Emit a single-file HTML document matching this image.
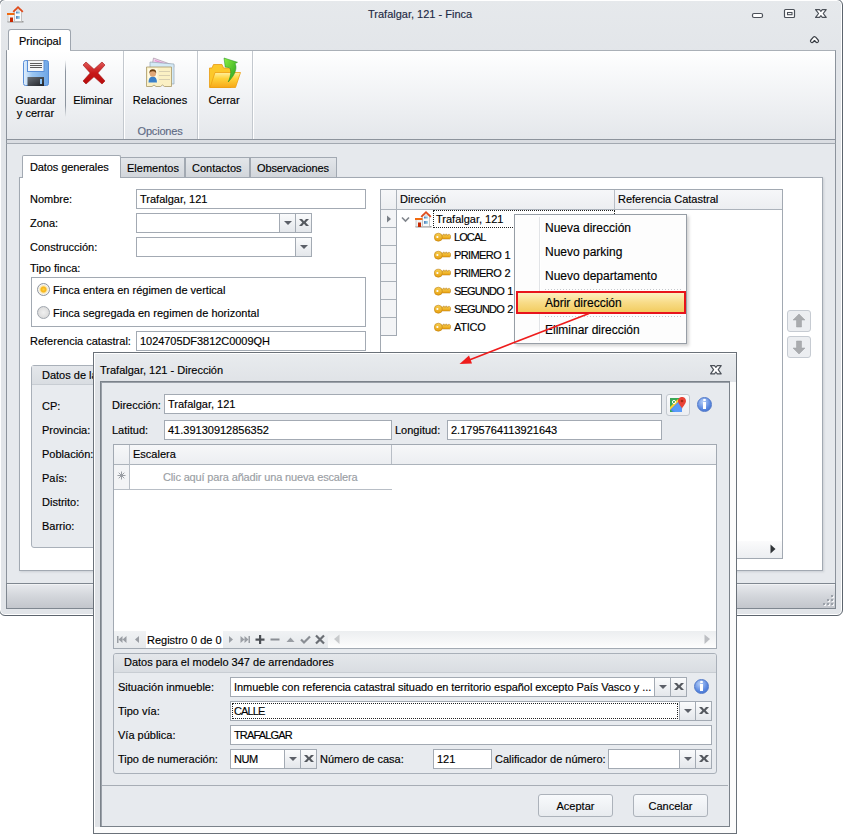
<!DOCTYPE html>
<html><head><meta charset="utf-8">
<style>
*{box-sizing:border-box;margin:0;padding:0}
html,body{width:844px;height:836px;overflow:hidden;background:#fff;font-family:"Liberation Sans",sans-serif;font-size:11px;color:#000}
.a{position:absolute}
.t{position:absolute;white-space:pre;line-height:13px;font-size:11px;-webkit-text-stroke:0.15px currentColor}
.m{font-size:12px;line-height:14px}
.inp{position:absolute;background:#fff;border:1px solid #a3aab3}
.btn{position:absolute;border:1px solid #a3aab3;background:linear-gradient(#fafbfc,#e4e7eb)}
.dd:after{content:"";position:absolute;left:50%;top:50%;margin:-2px 0 0 -4px;border-left:4px solid transparent;border-right:4px solid transparent;border-top:4px solid #5c6068}
.gb{position:absolute;border:1px solid #a9b0b9;border-radius:3px;background:#e8ebef}
.xg{position:absolute;width:11px;height:10px}
.xg:before,.xg:after{content:"";position:absolute;left:0;top:4px;width:11px;height:2.4px;background:#55595f;transform:rotate(40deg)}
.xg:after{transform:rotate(-40deg)}
.hl{position:absolute;height:1px}
.vl{position:absolute;width:1px}
</style></head><body>

<!-- MAIN WINDOW frame -->
<div class="a" style="left:-1px;top:-1px;width:844px;height:617px;background:linear-gradient(#e6e9ec,#e2e5e9 60px,#e2e5e9);border:1px solid #5d656e;border-radius:6px;box-shadow:inset 0 0 0 1px #fff"></div>
<!-- title icon -->
<svg class="a" style="left:7px;top:5px" width="17" height="18" viewBox="0 0 17 18">
  <rect x="0.5" y="16" width="16" height="1.5" fill="#9a9a9a"/>
  <rect x="7.5" y="5" width="7" height="11.5" fill="#fafafa" stroke="#b8b8b8" stroke-width="0.8"/>
  <polyline points="6.2,6.8 11,2.2 15.8,6.8" fill="none" stroke="#e04a1a" stroke-width="1.8"/>
  <defs><linearGradient id="hw" x1="0" x2="1"><stop offset="0" stop-color="#4a7ab8"/><stop offset="1" stop-color="#a8e0f0"/></linearGradient></defs>
  <rect x="9" y="6.5" width="4" height="2" fill="url(#hw)"/>
  <rect x="9" y="11" width="4" height="2.8" fill="url(#hw)"/>
  <rect x="1" y="9.5" width="6.5" height="7" fill="#f2f2f2" stroke="#b8b8b8" stroke-width="0.7"/>
  <rect x="0" y="8" width="7.5" height="2" fill="#f06a10"/>
  <rect x="3" y="12.5" width="3" height="4.5" fill="#c82800"/>
</svg>
<div class="t" style="left:368px;top:8px;color:#1e2a44">Trafalgar, 121 - Finca</div>
<!-- window buttons -->
<svg class="a" style="left:748px;top:6px" width="84" height="16" viewBox="0 0 84 16">
  <rect x="4.5" y="7.5" width="10" height="4" rx="1.5" fill="#fff" stroke="#4b5058" stroke-width="1.2"/>
  <rect x="36.5" y="3.5" width="10" height="8" rx="1" fill="#fff" stroke="#4b5058" stroke-width="1.2"/>
  <rect x="39.5" y="6.5" width="4.5" height="2.2" fill="#fff" stroke="#4b5058" stroke-width="1.1"/>
  <path d="M67.60,3.60 L71.52,3.60 L72.90,5.32 L74.28,3.60 L78.20,3.60 L75.23,7.50 L78.20,11.40 L74.28,11.40 L72.90,9.68 L71.52,11.40 L67.60,11.40 L70.57,7.50 Z" fill="#fff" stroke="#4b5058" stroke-width="1.2" stroke-linejoin="round"/>
</svg>
<svg class="a" style="left:807px;top:33px" width="14" height="12" viewBox="0 0 14 12">
  <path d="M5,8 L7.5,5.2 L10,8" fill="none" stroke="#3a3f46" stroke-width="4.2" stroke-linecap="round" stroke-linejoin="round"/>
  <path d="M5,8 L7.5,5.2 L10,8" fill="none" stroke="#fff" stroke-width="1.8" stroke-linecap="round" stroke-linejoin="round"/>
</svg>
<!-- ribbon tab -->
<div class="a" style="left:8px;top:29px;width:63px;height:23px;background:#fff;border:1px solid #9ea5ae;border-bottom:none;border-radius:3px 3px 0 0"></div>
<div class="t" style="left:19px;top:35px">Principal</div>
<!-- ribbon panel -->
<div class="a" style="left:6px;top:50px;width:830px;height:90px;border:1px solid #8c939c;border-top-color:#aab0b7;background:linear-gradient(#ffffff 0%,#f9fafb 20%,#eceef1 70%,#e4e7eb 100%)"></div>
<div class="a" style="left:7px;top:50px;width:63px;height:1px;background:#fff"></div>
<!-- main panel -->
<div class="a" style="left:6px;top:140px;width:830px;height:3px;background:#dadde2;border-left:1px solid #8c939c;border-right:1px solid #8c939c"></div>
<div class="a" style="left:6px;top:143px;width:830px;height:441px;background:#e6e9ed;border:1px solid #8c939c;border-top:1px solid #a2a8b0;border-bottom:none"></div>
<!-- status bar -->
<div class="a" style="left:6px;top:583px;width:830px;height:26px;border:1px solid #7f8790;background:linear-gradient(#e8eaee,#d3d6db 50%,#c3c6cc);box-shadow:inset 0 1px 0 #f2f3f5"></div>

<!-- grip -->
<svg class="a" style="left:820px;top:592px" width="14" height="14" viewBox="0 0 14 14">
 <g fill="#f4f5f7"><rect x="12" y="4" width="2" height="2"/><rect x="8" y="8" width="2" height="2"/><rect x="12" y="8" width="2" height="2"/><rect x="4" y="12" width="2" height="2"/><rect x="8" y="12" width="2" height="2"/><rect x="12" y="12" width="2" height="2"/></g>
 <g fill="#9ba1a9"><rect x="11" y="3" width="2" height="2"/><rect x="7" y="7" width="2" height="2"/><rect x="11" y="7" width="2" height="2"/><rect x="3" y="11" width="2" height="2"/><rect x="7" y="11" width="2" height="2"/><rect x="11" y="11" width="2" height="2"/></g>
</svg>
<!-- RIBBON CONTENT -->
<div class="a" style="left:65px;top:60px;width:1px;height:57px;background:linear-gradient(rgba(140,148,158,0),#8c949e 20%,#8c949e 80%,rgba(140,148,158,0))"></div>
<div class="a" style="left:123px;top:51px;width:1px;height:88px;background:#c3c8ce"></div>
<div class="a" style="left:124px;top:51px;width:1px;height:88px;background:#fff"></div>
<div class="a" style="left:197px;top:51px;width:1px;height:88px;background:#c3c8ce"></div>
<div class="a" style="left:198px;top:51px;width:1px;height:88px;background:#fff"></div>
<div class="a" style="left:252px;top:51px;width:1px;height:88px;background:#c3c8ce"></div>
<div class="a" style="left:253px;top:51px;width:1px;height:88px;background:#fff"></div>
<!-- floppy -->
<svg class="a" style="left:23px;top:60px" width="26" height="26" viewBox="0 0 26 26">
  <defs><linearGradient id="fb" x1="0" x2="1"><stop offset="0" stop-color="#e4f0fc"/><stop offset="0.35" stop-color="#9cc7f2"/><stop offset="1" stop-color="#6ea6e6"/></linearGradient>
  <linearGradient id="fs" x1="0" y1="0" x2="1" y2="1"><stop offset="0" stop-color="#6a7078"/><stop offset="1" stop-color="#202226"/></linearGradient></defs>
  <rect x="0.5" y="0.5" width="25" height="25" rx="2" fill="url(#fb)" stroke="#5a8fd8"/>
  <rect x="4.5" y="0.5" width="16.5" height="11" fill="#f4f6f8" stroke="#5a8fd8"/>
  <rect x="5" y="0" width="15.5" height="1" fill="#999"/>
  <path d="M7,3.5H19M7,5.5H19M7,7.5H19" stroke="#4a4a4a" stroke-width="0.9"/>
  <rect x="4.5" y="17" width="16.5" height="9" fill="url(#fs)"/>
  <rect x="17" y="19" width="2" height="5" fill="#8cc4f6"/>
</svg>
<!-- red X -->
<svg class="a" style="left:82px;top:61px" width="24" height="24" viewBox="0 0 24 24">
  <defs><linearGradient id="xr" x1="0" y1="0" x2="0" y2="1"><stop offset="0" stop-color="#e05858"/><stop offset="0.5" stop-color="#c81818"/><stop offset="1" stop-color="#b80c0c"/></linearGradient></defs>
  <path d="M4,1 L12,8.2 L20,1 L23,4 L15.8,12 L23,20 L20,23 L12,15.8 L4,23 L1,20 L8.2,12 L1,4 Z" fill="url(#xr)" stroke="#a01010" stroke-width="0.6" stroke-linejoin="round"/>
</svg>
<!-- relaciones -->
<svg class="a" style="left:144px;top:56px" width="32" height="32" viewBox="0 0 32 32">
  <path d="M9.5,2 L30,9.5 L26,28 L6,20 Z" fill="#f4d0ec" stroke="#a898a8" stroke-width="0.7"/>
  <path d="M11,4.5 L27,10" stroke="#e090d0" stroke-width="1.2"/>
  <path d="M6,6 L30,8 L30,28 L6,27 Z" fill="#d4eaf6" stroke="#98a8b4" stroke-width="0.7"/>
  <path d="M2.5,11 H27.5 V30.5 H20.5 Q18.5,27.5 16.5,30.5 H12 Q10,27.5 8,30.5 H2.5 Z" fill="#fbf0c4" stroke="#a89868" stroke-width="0.8"/>
  <rect x="4" y="12.5" width="9.5" height="14" fill="#fffbe6"/>
  <path d="M4.5,26.5 Q4.5,20.5 8.8,20.5 Q13,20.5 13,26.5 Z" fill="#3a80c8"/>
  <circle cx="8.8" cy="17.5" r="3.2" fill="#e0a878"/>
  <path d="M5.4,17.5 Q5,13.2 8.8,13.2 Q12.6,13.2 12.2,17.5 Q11.5,15 8.8,15.2 Q6,15 5.4,17.5Z" fill="#6a3e10"/>
  <path d="M15,15.5H26M15,19.5H26M15,23.5H26" stroke="#d8ceb0" stroke-width="1"/>
</svg>
<!-- folder -->
<svg class="a" style="left:208px;top:56px" width="34" height="33" viewBox="0 0 34 33">
  <defs><linearGradient id="fo" x1="0" y1="0" x2="0" y2="1"><stop offset="0" stop-color="#fff0a0"/><stop offset="0.4" stop-color="#ffd33a"/><stop offset="1" stop-color="#f7a818"/></linearGradient>
  <linearGradient id="ga" x1="0" y1="0" x2="1" y2="1"><stop offset="0" stop-color="#8cf040"/><stop offset="1" stop-color="#1e9a1e"/></linearGradient></defs>
  <path d="M1.5,12 L4,12 L5.5,8.5 L14,8.5 L15.5,12 L23,12 L23,31.5 L1.5,31.5 Z" fill="#fcc82a" stroke="#e89a10" stroke-width="0.8"/>
  <path d="M7,16.5 L32.5,16.5 L27.5,31.5 L2,31.5 Z" fill="url(#fo)" stroke="#eea010" stroke-width="0.8"/>
  <path d="M16,2 L29.5,6.3 L27,7.6 C29,11 28.5,17.5 20.2,26 C23.2,19 23.6,13.8 21.2,11.6 L17.2,11 Z" fill="url(#ga)" stroke="#1a8a1a" stroke-width="0.5"/>
</svg>
<div class="t" style="left:0px;width:71px;text-align:center;top:94px">Guardar</div>
<div class="t" style="left:0px;width:71px;text-align:center;top:107px">y cerrar</div>
<div class="t" style="left:63px;width:60px;text-align:center;top:94px">Eliminar</div>
<div class="t" style="left:120px;width:80px;text-align:center;top:94px">Relaciones</div>
<div class="t" style="left:194px;width:60px;text-align:center;top:94px">Cerrar</div>
<div class="t" style="left:120px;width:80px;text-align:center;top:125px;color:#5e6a84;letter-spacing:-0.2px">Opciones</div>

<!-- TAB CONTROL -->
<div class="a" style="left:19px;top:177px;width:804px;height:394px;background:#fff;border:1px solid #a2a9b2;box-shadow:1px 1px 2px rgba(120,130,140,0.25)"></div>
<div class="a" style="left:22px;top:155px;width:99px;height:23px;background:#fff;border:1px solid #a2a9b2;border-bottom:none;border-radius:2px 2px 0 0"></div>
<div class="a" style="left:120px;top:157px;width:65px;height:21px;background:linear-gradient(#e3e6ea,#d2d6db);border:1px solid #a2a9b2"></div>
<div class="a" style="left:185px;top:157px;width:65px;height:21px;background:linear-gradient(#e3e6ea,#d2d6db);border:1px solid #a2a9b2"></div>
<div class="a" style="left:250px;top:157px;width:87px;height:21px;background:linear-gradient(#e3e6ea,#d2d6db);border:1px solid #a2a9b2"></div>
<div class="t" style="left:30px;top:161px;letter-spacing:-0.1px">Datos generales</div>
<div class="t" style="left:127px;top:162px">Elementos</div>
<div class="t" style="left:192px;top:162px">Contactos</div>
<div class="t" style="left:257px;top:162px;letter-spacing:-0.12px">Observaciones</div>
<!-- left form -->
<div class="t" style="left:30px;top:193px">Nombre:</div>
<div class="t" style="left:30px;top:217px">Zona:</div>
<div class="t" style="left:30px;top:241px">Construcción:</div>
<div class="t" style="left:30px;top:262px">Tipo finca:</div>
<div class="t" style="left:30px;top:335px">Referencia catastral:</div>
<div class="inp" style="left:136px;top:189px;width:230px;height:20px"></div>
<div class="t" style="left:140px;top:193px">Trafalgar, 121</div>
<div class="inp" style="left:136px;top:213px;width:176px;height:20px"></div>
<div class="btn dd" style="left:279px;top:213px;width:17px;height:20px"></div>
<div class="btn" style="left:295px;top:213px;width:17px;height:20px"></div>
<svg class="a" style="left:299px;top:219px" width="10" height="7" viewBox="0 0 10 7"><path d="M0,0H3L5,2.2L7,0H10L6.7,3.5L10,7H7L5,4.8L3,7H0L3.3,3.5Z" fill="#55595f"/></svg>
<div class="inp" style="left:136px;top:237px;width:176px;height:20px"></div>
<div class="btn dd" style="left:295px;top:237px;width:17px;height:20px"></div>
<div class="a" style="left:31px;top:277px;width:335px;height:50px;border:1px solid #a2a9b2;background:#fff"></div>
<div class="a" style="left:37px;top:283px;width:13px;height:13px;border-radius:50%;border:1px solid #8e949c;background:radial-gradient(circle,#ffd040 0,#f6b418 2.5px,#fbe6a8 3.5px,#f4f4f4 5px)"></div>
<div class="a" style="left:37px;top:306px;width:13px;height:13px;border-radius:50%;border:1px solid #a0a6ae;background:radial-gradient(circle,#f0f0f0 0,#e2e2e2 4px,#d8d8d8 6px)"></div>
<div class="t" style="left:53px;top:284px">Finca entera en régimen de vertical</div>
<div class="t" style="left:53px;top:307px">Finca segregada en regimen de horizontal</div>
<div class="inp" style="left:136px;top:331px;width:230px;height:20px"></div>
<div class="t" style="left:140px;top:335px;letter-spacing:-0.05px">1024705DF3812C0009QH</div>
<!-- group box Datos de la -->
<div class="gb" style="left:31px;top:365px;width:300px;height:183px"></div>
<div class="a" style="left:32px;top:366px;width:298px;height:19px;background:linear-gradient(#e4e7eb,#d9dde2);border-bottom:1px solid #c8cdd3"></div>
<div class="t" style="left:42px;top:369px">Datos de la</div>
<div class="t" style="left:42px;top:400px">CP:</div>
<div class="t" style="left:42px;top:424px">Provincia:</div>
<div class="t" style="left:42px;top:448px">Población:</div>
<div class="t" style="left:42px;top:472px">País:</div>
<div class="t" style="left:42px;top:496px">Distrito:</div>
<div class="t" style="left:42px;top:520px">Barrio:</div>

<!-- GRID (tree list) -->
<div class="a" style="left:380px;top:189px;width:403px;height:370px;background:#fff;border:1px solid #a2a9b2"></div>
<div class="a" style="left:381px;top:190px;width:401px;height:20px;background:linear-gradient(#f6f7f9,#eceef1);border-bottom:1px solid #acb3bb"></div>
<div class="a" style="left:396px;top:190px;width:1px;height:19px;background:#acb3bb"></div>
<div class="a" style="left:614px;top:190px;width:1px;height:19px;background:#b8bec6"></div>
<div class="t" style="left:400px;top:193px">Dirección</div>
<div class="t" style="left:618px;top:193px">Referencia Catastral</div>
<div class="a" style="left:380px;top:210px;width:17px;height:126px;background:#f3f4f6;border:1px solid #a2a9b2;border-top:none;background-image:repeating-linear-gradient(#f3f4f6 0,#f3f4f6 17px,#a9b0b8 17px,#a9b0b8 18px)"></div>
<svg class="a" style="left:386px;top:215px" width="6" height="8"><path d="M1,0.5 L5,4 L1,7.5Z" fill="#7a7f86"/></svg>
<svg class="a" style="left:401px;top:216px" width="9" height="7"><path d="M1,1.5 L4.5,5 L8,1.5" fill="none" stroke="#80858c" stroke-width="1.6"/></svg>
<!-- tree house icon -->
<svg class="a" style="left:415px;top:210px" width="17" height="18" viewBox="0 0 17 18">
  <rect x="0.5" y="16" width="16" height="1.5" fill="#9a9a9a"/>
  <rect x="7.5" y="5" width="7" height="11.5" fill="#fafafa" stroke="#b8b8b8" stroke-width="0.8"/>
  <polyline points="6.2,6.8 11,2.2 15.8,6.8" fill="none" stroke="#e04a1a" stroke-width="1.8"/>
  <defs><linearGradient id="hw" x1="0" x2="1"><stop offset="0" stop-color="#4a7ab8"/><stop offset="1" stop-color="#a8e0f0"/></linearGradient></defs>
  <rect x="9" y="6.5" width="4" height="2" fill="url(#hw)"/>
  <rect x="9" y="11" width="4" height="2.8" fill="url(#hw)"/>
  <rect x="1" y="9.5" width="6.5" height="7" fill="#f2f2f2" stroke="#b8b8b8" stroke-width="0.7"/>
  <rect x="0" y="8" width="7.5" height="2" fill="#f06a10"/>
  <rect x="3" y="12.5" width="3" height="4.5" fill="#c82800"/>
</svg>
<div class="a" style="left:433px;top:210px;width:182px;height:18px;border:1px dotted #202020"></div>
<div class="t" style="left:436px;top:213px">Trafalgar, 121</div>
<svg width="0" height="0" style="position:absolute"><defs>
  <symbol id="key" viewBox="0 0 17 10">
    <defs><linearGradient id="kg" x1="0" y1="0" x2="0" y2="1"><stop offset="0" stop-color="#f8d050"/><stop offset="1" stop-color="#e8a010"/></linearGradient></defs>
    <path d="M7.5,3.3 H9 V2.2 H10.4 V3.3 H11.6 V2.2 H13 V3.3 H14.2 V2.4 H15.6 L16.5,3.5 V6.3 L15.6,7 H7.5 Z" fill="url(#kg)" stroke="#b8780c" stroke-width="0.5"/>
    <circle cx="4.3" cy="5.2" r="4" fill="url(#kg)" stroke="#c08010" stroke-width="0.6"/>
    <circle cx="3.4" cy="5" r="1.1" fill="#fff"/>
  </symbol>
</defs></svg>
<svg class="a" style="left:434px;top:232px" width="17" height="10"><use href="#key"/></svg>
<svg class="a" style="left:434px;top:250px" width="17" height="10"><use href="#key"/></svg>
<svg class="a" style="left:434px;top:268px" width="17" height="10"><use href="#key"/></svg>
<svg class="a" style="left:434px;top:286px" width="17" height="10"><use href="#key"/></svg>
<svg class="a" style="left:434px;top:304px" width="17" height="10"><use href="#key"/></svg>
<svg class="a" style="left:434px;top:322px" width="17" height="10"><use href="#key"/></svg>
<div class="t" style="left:454px;top:231px;letter-spacing:-0.9px">LOCAL</div>
<div class="t" style="left:454px;top:249px;letter-spacing:-0.6px;word-spacing:1px">PRIMERO 1</div>
<div class="t" style="left:454px;top:267px;letter-spacing:-0.6px;word-spacing:1px">PRIMERO 2</div>
<div class="t" style="left:454px;top:285px;letter-spacing:-0.8px;word-spacing:1px">SEGUNDO 1</div>
<div class="t" style="left:454px;top:303px;letter-spacing:-0.8px;word-spacing:1px">SEGUNDO 2</div>
<div class="t" style="left:454px;top:321px;letter-spacing:-0.25px">ATICO</div>
<!-- h scrollbar -->
<div class="a" style="left:381px;top:541px;width:401px;height:17px;background:linear-gradient(#fbfbfc,#eceef1)"></div>
<svg class="a" style="left:770px;top:544px" width="6" height="10"><path d="M0.5,0.5 L5.5,5 L0.5,9.5Z" fill="#303438"/></svg>
<!-- up/down buttons -->
<div class="a" style="left:787px;top:310px;width:24px;height:22px;border:1px solid #c6cbd2;border-radius:3px;background:#eceef1"></div>
<div class="a" style="left:787px;top:336px;width:24px;height:22px;border:1px solid #c6cbd2;border-radius:3px;background:#eceef1"></div>
<svg class="a" style="left:792px;top:313px" width="14" height="16"><path d="M7,1 L13,7 L9.5,7 L9.5,14 L4.5,14 L4.5,7 L1,7Z" fill="#a9abae" stroke="#9a9ca0" stroke-width="0.5"/></svg>
<svg class="a" style="left:792px;top:339px" width="14" height="16"><path d="M7,15 L13,9 L9.5,9 L9.5,2 L4.5,2 L4.5,9 L1,9Z" fill="#a9abae" stroke="#9a9ca0" stroke-width="0.5"/></svg>

<!-- CONTEXT MENU -->
<div class="a" style="left:514px;top:214px;width:173px;height:130px;background:#fdfdfd;border:1px solid #979ea6;box-shadow:2px 2px 3px rgba(0,0,0,0.18)"></div>
<div class="a" style="left:539px;top:217px;width:1px;height:124px;background:#e2e4e7"></div>
<div class="a" style="left:540px;top:217px;width:1px;height:124px;background:#fff"></div>
<div class="a" style="left:545px;top:289px;width:136px;height:1px;background-image:linear-gradient(90deg,#c5c8cc 50%,transparent 50%);background-size:3px 1px"></div>
<div class="a" style="left:545px;top:316px;width:136px;height:1px;background-image:linear-gradient(90deg,#c5c8cc 50%,transparent 50%);background-size:3px 1px"></div>
<div class="a" style="left:516px;top:291px;width:170px;height:23px;border:2px solid #e8141c;background:linear-gradient(#fdf0c0,#f8dc88 50%,#f2cc60)"></div>
<div class="t m" style="left:545px;top:221px">Nueva dirección</div>
<div class="t m" style="left:545px;top:245px">Nuevo parking</div>
<div class="t m" style="left:545px;top:269px">Nuevo departamento</div>
<div class="t m" style="left:545px;top:296px">Abrir dirección</div>
<div class="t m" style="left:545px;top:323px">Eliminar dirección</div>
<!-- DIALOG -->
<div class="a" style="left:93px;top:352px;width:644px;height:482px;background:#fcfcfc;border:1px solid #6a7179"></div>
<div class="a" style="left:94px;top:353px;width:642px;height:29px;background:linear-gradient(#e8ebee,#e0e3e7);border-top:1px solid #fff;border-left:1px solid #fff"></div>
<div class="a" style="left:94px;top:382px;width:6px;height:445px;background:#dfe2e6;border-left:1px solid #fff"></div>
<div class="a" style="left:100px;top:381px;width:630px;height:446px;background:#e7eaee;border:1px solid #7b828a;box-shadow:inset 1px 1px 0 #9aa0a8"></div>
<div class="a" style="left:102px;top:785px;width:626px;height:1px;background:#a7adb5"></div>
<div class="t" style="left:100px;top:364px">Trafalgar, 121 - Dirección</div>
<svg class="a" style="left:707px;top:362px" width="16" height="14" viewBox="0 0 16 14">
  <path d="M3.60,3.60 L7.52,3.60 L8.90,5.40 L10.28,3.60 L14.20,3.60 L11.23,7.70 L14.20,11.80 L10.28,11.80 L8.90,10.00 L7.52,11.80 L3.60,11.80 L6.57,7.70 Z" fill="#fff" stroke="#4b5058" stroke-width="1.2" stroke-linejoin="round"/>
</svg>
<div class="t" style="left:112px;top:399px">Dirección:</div>
<div class="inp" style="left:164px;top:394px;width:498px;height:20px"></div>
<div class="t" style="left:168px;top:398px">Trafalgar, 121</div>
<div class="a" style="left:666px;top:394px;width:24px;height:22px;border:1px solid #c3c8cf;border-radius:3px;background:linear-gradient(#fafbfc,#eceef1)"></div>
<svg class="a" style="left:669px;top:396px" width="18" height="18" viewBox="0 0 18 18">
  <path d="M1,2 H13 V16 H1 Z" fill="#3aa757"/>
  <path d="M1,13 L9,5 L13,9 V16 H4 Z" fill="#4a8af4"/>
  <path d="M1,11 L9,3 L10.5,4.5 L2.5,12.5 L1,14 Z" fill="#fbd230"/>
  <path d="M3,13 L10,6 L13,9 V16 H6 Z" fill="#5a9af8"/>
  <circle cx="5" cy="6" r="1.6" fill="none" stroke="#fff" stroke-width="1"/>
  <path d="M13,1 C10,1 9,3.5 9,5 C9,8 13,11 13,13 C13,11 17,8 17,5 C17,3.5 16,1 13,1 Z" fill="#e94235"/>
  <circle cx="13" cy="5" r="1.3" fill="#a52714"/>
</svg>
<div class="a" style="left:697px;top:397px;width:15px;height:15px;border-radius:50%;background:radial-gradient(circle at 40% 30%,#b8d0f8,#5a88e0 60%,#3a68c8);border:1px solid #5078c8"></div>
<div class="a" style="left:703px;top:399px;width:3px;height:2px;background:#fff;border-radius:1px"></div>
<div class="a" style="left:703px;top:402px;width:3px;height:7px;background:#fff"></div>
<div class="t" style="left:112px;top:424px">Latitud:</div>
<div class="inp" style="left:164px;top:420px;width:228px;height:20px"></div>
<div class="t" style="left:168px;top:424px">41.39130912856352</div>
<div class="t" style="left:395px;top:424px">Longitud:</div>
<div class="inp" style="left:447px;top:420px;width:215px;height:20px"></div>
<div class="t" style="left:451px;top:424px">2.1795764113921643</div>
<!-- dialog grid -->
<div class="a" style="left:113px;top:444px;width:604px;height:205px;background:#fff;border:1px solid #a2a9b2"></div>
<div class="a" style="left:114px;top:445px;width:602px;height:20px;background:linear-gradient(#f6f7f9,#eceef1);border-bottom:1px solid #acb3bb"></div>
<div class="a" style="left:129px;top:445px;width:1px;height:44px;background:#b8bec6"></div>
<div class="a" style="left:391px;top:445px;width:1px;height:19px;background:#b8bec6"></div>
<div class="a" style="left:114px;top:465px;width:15px;height:24px;background:#f3f4f6"></div>
<div class="a" style="left:114px;top:489px;width:278px;height:1px;background:#b8bec6"></div>
<div class="t" style="left:133px;top:448px">Escalera</div>
<svg class="a" style="left:117px;top:471px" width="9" height="9" viewBox="0 0 9 9"><path d="M4.5,0.5V8.5M0.5,4.5H8.5M1.7,1.7L7.3,7.3M7.3,1.7L1.7,7.3" stroke="#9a9ea4" stroke-width="1"/></svg>
<div class="t" style="left:163px;top:471px;color:#9a9ea4;letter-spacing:-0.15px">Clic aquí para añadir una nueva escalera</div>
<!-- navigator -->
<div class="a" style="left:114px;top:631px;width:602px;height:17px;background:linear-gradient(#eceef0,#fdfdfd)"></div>
<div class="a" style="left:114px;top:631px;width:214px;height:17px;background:linear-gradient(#f0f2f4,#e6e9ec)"></div>
<div class="a" style="left:146px;top:631px;width:77px;height:17px;background:#fff"></div>
<div class="t" style="left:147px;top:634px">Registro 0 de 0</div>
<svg class="a" style="left:114px;top:631px" width="220" height="17" viewBox="0 0 220 17">
  <g fill="#9a9ea4">
    <rect x="3" y="5" width="1.5" height="7"/><path d="M4.5,8.5 L8.5,5 V12Z M8.5,8.5 L12.5,5 V12Z"/>
    <path d="M21,8.5 L25,5 V12Z"/>
    <path d="M115,5 L119,8.5 L115,12Z"/>
    <path d="M126.5,5 L130.5,8.5 L126.5,12Z M130.5,5 L134.5,8.5 L130.5,12Z"/><rect x="134.5" y="5" width="1.5" height="7"/>
  </g>
  <g fill="#4a4e54"><rect x="141.5" y="7.5" width="9" height="2.2"/><rect x="145" y="4" width="2.2" height="9"/></g>
  <rect x="156.5" y="7.5" width="9" height="2" fill="#8a8e94"/>
  <path d="M172.5,11 L176.5,6.5 L180.5,11Z" fill="#9a9ea4"/>
  <path d="M187,8.5 L190,11.5 L196,5.5" fill="none" stroke="#8a8e94" stroke-width="2.2"/>
  <path d="M202,4.5 L210,12.5 M210,4.5 L202,12.5" stroke="#6a6e74" stroke-width="2.2"/>
  <path d="M225,4.5 L220,8.5 L225,12.5Z" fill="#c8cacc"/>
</svg>
<svg class="a" style="left:704px;top:634px" width="8" height="11"><path d="M0.5,0.5 L6,5 L0.5,10Z" fill="#bcbec2"/></svg>
<svg class="a" style="left:333px;top:634px" width="8" height="11"><path d="M6.5,0.5 L1,5 L6.5,10Z" fill="#c8cacc"/></svg>
<!-- group 347 -->
<div class="gb" style="left:113px;top:653px;width:604px;height:121px"></div>
<div class="a" style="left:114px;top:654px;width:602px;height:19px;background:linear-gradient(#e4e7eb,#d9dde2);border-bottom:1px solid #c8cdd3;border-radius:2px 2px 0 0"></div>
<div class="t" style="left:124px;top:656px">Datos para el modelo 347 de arrendadores</div>
<div class="t" style="left:118px;top:681px">Situación inmueble:</div>
<div class="t" style="left:118px;top:705px">Tipo vía:</div>
<div class="t" style="left:118px;top:729px">Vía pública:</div>
<div class="t" style="left:118px;top:753px">Tipo de numeración:</div>
<div class="inp" style="left:230px;top:677px;width:457px;height:20px"></div>
<div class="btn dd" style="left:654px;top:677px;width:17px;height:20px"></div>
<div class="btn" style="left:670px;top:677px;width:17px;height:20px"></div>
<svg class="a" style="left:674px;top:683px" width="10" height="7" viewBox="0 0 10 7"><path d="M0,0H3L5,2.2L7,0H10L6.7,3.5L10,7H7L5,4.8L3,7H0L3.3,3.5Z" fill="#55595f"/></svg>
<div class="t" style="left:234px;top:681px;letter-spacing:-0.05px">Inmueble con referencia catastral situado en territorio español excepto País Vasco y ...</div>
<div class="a" style="left:694px;top:679px;width:15px;height:15px;border-radius:50%;background:radial-gradient(circle at 40% 30%,#b8d0f8,#5a88e0 60%,#3a68c8);border:1px solid #5078c8"></div>
<div class="a" style="left:700px;top:681px;width:3px;height:2px;background:#fff;border-radius:1px"></div>
<div class="a" style="left:700px;top:684px;width:3px;height:7px;background:#fff"></div>
<div class="inp" style="left:230px;top:701px;width:482px;height:20px"></div>
<div class="a" style="left:232px;top:703px;width:446px;height:16px;border:1px dotted #202020"></div>
<div class="btn dd" style="left:679px;top:701px;width:17px;height:20px"></div>
<div class="btn" style="left:695px;top:701px;width:17px;height:20px"></div>
<svg class="a" style="left:699px;top:707px" width="10" height="7" viewBox="0 0 10 7"><path d="M0,0H3L5,2.2L7,0H10L6.7,3.5L10,7H7L5,4.8L3,7H0L3.3,3.5Z" fill="#55595f"/></svg>
<div class="t" style="left:234px;top:705px;letter-spacing:-0.9px">CALLE</div>
<div class="inp" style="left:230px;top:725px;width:482px;height:20px"></div>
<div class="t" style="left:234px;top:729px;letter-spacing:-0.85px">TRAFALGAR</div>
<div class="inp" style="left:230px;top:749px;width:87px;height:20px"></div>
<div class="btn dd" style="left:284px;top:749px;width:17px;height:20px"></div>
<div class="btn" style="left:300px;top:749px;width:17px;height:20px"></div>
<svg class="a" style="left:304px;top:755px" width="10" height="7" viewBox="0 0 10 7"><path d="M0,0H3L5,2.2L7,0H10L6.7,3.5L10,7H7L5,4.8L3,7H0L3.3,3.5Z" fill="#55595f"/></svg>
<div class="t" style="left:234px;top:753px;letter-spacing:-0.4px">NUM</div>
<div class="t" style="left:320px;top:753px">Número de casa:</div>
<div class="inp" style="left:433px;top:749px;width:59px;height:20px"></div>
<div class="t" style="left:437px;top:753px">121</div>
<div class="t" style="left:495px;top:753px">Calificador de número:</div>
<div class="inp" style="left:608px;top:749px;width:104px;height:20px"></div>
<div class="btn dd" style="left:679px;top:749px;width:17px;height:20px"></div>
<div class="btn" style="left:695px;top:749px;width:17px;height:20px"></div>
<svg class="a" style="left:699px;top:755px" width="10" height="7" viewBox="0 0 10 7"><path d="M0,0H3L5,2.2L7,0H10L6.7,3.5L10,7H7L5,4.8L3,7H0L3.3,3.5Z" fill="#55595f"/></svg>
<!-- buttons -->
<div class="a" style="left:538px;top:794px;width:75px;height:23px;border:1px solid #acb2ba;border-radius:3px;background:linear-gradient(#f8fafc,#e8ebef)"></div>
<div class="a" style="left:633px;top:794px;width:75px;height:23px;border:1px solid #acb2ba;border-radius:3px;background:linear-gradient(#f8fafc,#e8ebef)"></div>
<div class="t" style="left:538px;width:75px;text-align:center;top:800px">Aceptar</div>
<div class="t" style="left:633px;width:75px;text-align:center;top:800px">Cancelar</div>

<!-- red arrow -->
<svg class="a" style="left:0;top:0" width="844" height="836" viewBox="0 0 844 836">
  <line x1="589" y1="313.5" x2="468" y2="360.5" stroke="#ee1c1c" stroke-width="1.6"/>
  <path d="M459.5,364 L469,355.5 L472,363.5 Z" fill="#ee1c1c"/>
</svg>

</body></html>
